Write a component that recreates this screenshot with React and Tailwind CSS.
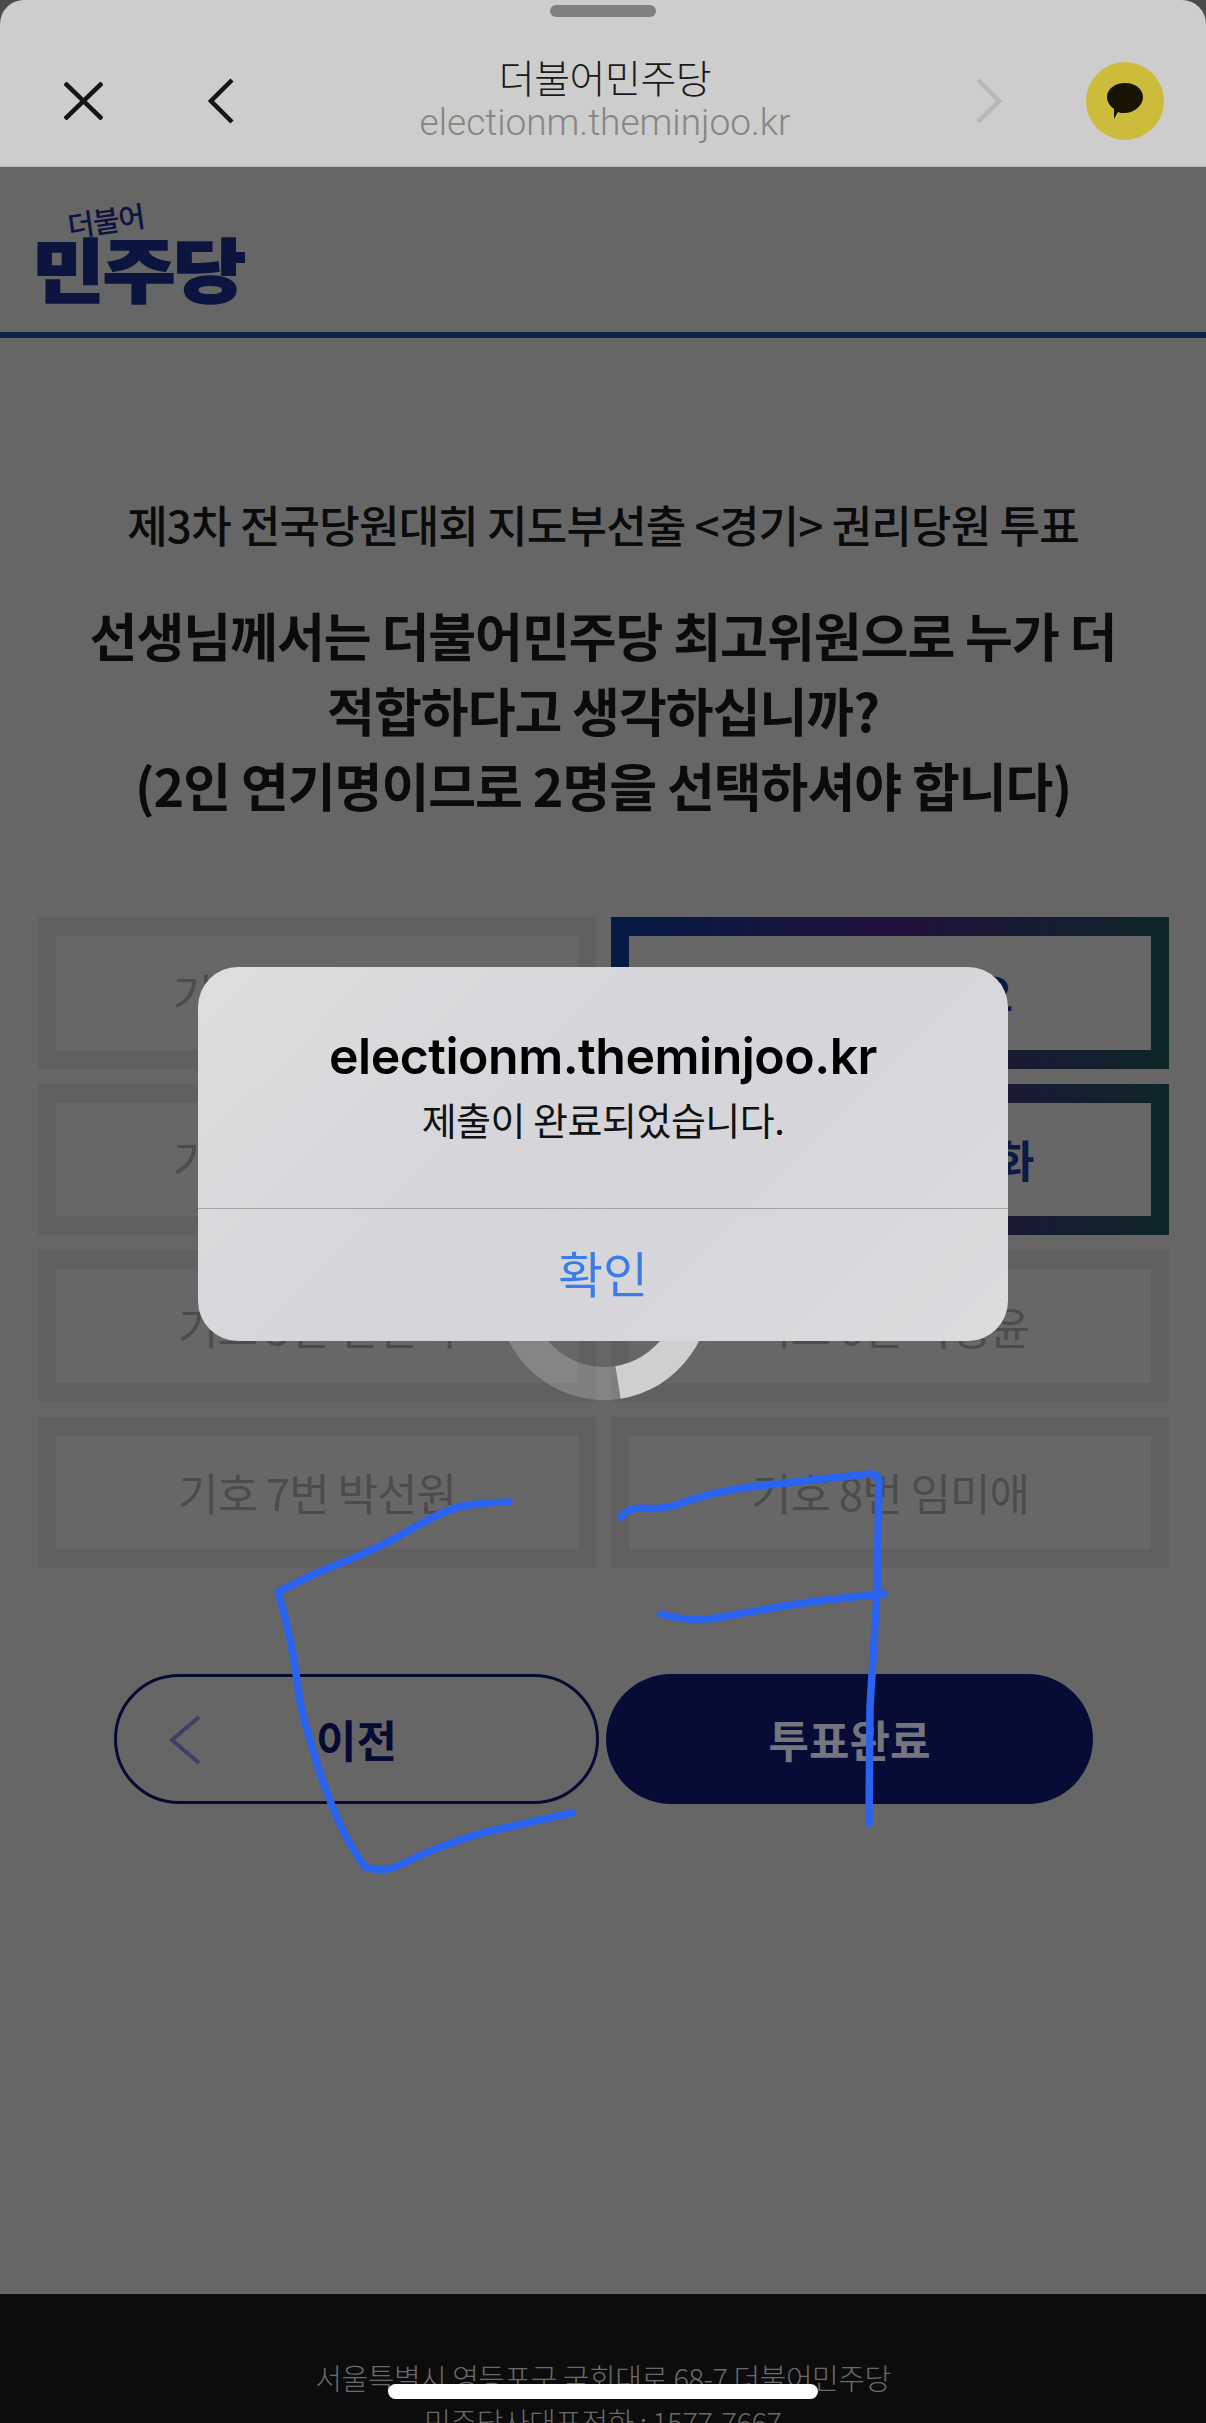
import React from 'react'

const kr = "font-['Noto_Sans_CJK_KR',sans-serif]"

// names behind the alert can't be read, so those stay as ○
const candidates = [
  { id: 1, label: '기호 1번 ○○○' },
  { id: 2, label: '기호 2번 ○오', selected: true },
  { id: 3, label: '기호 3번 ○○○' },
  { id: 4, label: '기호 4번 ○○화', selected: true },
  { id: 5, label: '기호 5번 전언기' },
  { id: 6, label: '기호 6번 이성윤' },
  { id: 7, label: '기호 7번 박선원' },
  { id: 8, label: '기호 8번 임미애' },
]

const Candidate = ({ label, selected }) => (
  <div
    className={
      selected
        ? 'h-[151.5px] px-[18px] py-[19px] bg-[linear-gradient(90deg,#031a44,#21103d_50%,#0e2628)]'
        : 'h-[151.5px] px-[18px] py-[19px] bg-[#606060]'
    }
  >
    <div
      className={
        selected
          ? 'h-full bg-[#676767] flex items-center justify-center text-[44px] font-semibold text-[#0c1a45] tracking-[-1px]'
          : 'h-full bg-[#676767] flex items-center justify-center text-[44px] text-[#4c4c4c] tracking-[-1px]'
      }
    >
      {label}
    </div>
  </div>
)

const TopBar = () => (
  <div className="relative h-[167px] bg-[#cdcdcd] rounded-t-[24px] border-b border-[#b9b9b9] shrink-0 flex items-center pl-[64px] pr-[42px]">
    <div className="absolute left-[550px] top-[5px] w-[106px] h-[12px] rounded-full bg-[#808080]"></div>
    <svg width="39" height="38" viewBox="0 0 39 38" className="mt-[35px] shrink-0" fill="none" stroke="#151515" strokeWidth="4.5">
      <path d="M1 1 L38 37 M38 1 L1 37" />
    </svg>
    <svg width="26" height="46" viewBox="0 0 26 46" className="ml-[105px] mt-[35px] shrink-0" fill="none" stroke="#151515" strokeWidth="4.5">
      <path d="M24 2 L3 23 L24 44" />
    </svg>
    <div className={`flex-1 flex flex-col items-center pt-[30px] ${kr}`}>
      <div className="text-[39px] leading-[50px] font-light text-[#1a1a1a] tracking-[-0.5px]">더불어민주당</div>
      <div className="text-[37px] leading-[44px] font-light text-[#858585] font-['Roboto',sans-serif]">electionm.theminjoo.kr</div>
    </div>
    <svg width="26" height="46" viewBox="0 0 26 46" className="mt-[35px] shrink-0" fill="none" stroke="#b8b8b8" strokeWidth="4.5">
      <path d="M2 2 L23 23 L2 44" />
    </svg>
    <div className="ml-[84px] mt-[35px] w-[78px] h-[78px] rounded-full bg-[#cdbb3c] flex items-center justify-center shrink-0">
      <svg width="36" height="36" viewBox="0 0 36 36" fill="#171404">
        <path d="M18 0 C28 0 36 6 36 14 C36 22 28 30 17 30 C15 30 13 30 11 29 L7 36 L7 26 C3 23 0 19 0 14 C0 6 8 0 18 0 Z" />
      </svg>
    </div>
  </div>
)

const Header = () => (
  <div className={`relative h-[171px] shrink-0 bg-[#666666] border-b-[6px] border-[#0b2243] ${kr}`}>
    <div className="absolute left-[32px] top-[60px] scale-y-[0.88] origin-top-left text-[79px] leading-[92px] font-black text-[#0c1440] tracking-[-2px] [-webkit-text-stroke:2px_#0c1440]">민주당</div>
    <div className="absolute left-[67px] top-[32px] -rotate-[8deg] text-[29px] leading-[40px] font-medium text-[#0c1440] tracking-[-1px]">더불어</div>
  </div>
)

const Scribble = () => (
  <svg className="absolute left-0 top-0 pointer-events-none" width="1206" height="2423" fill="none" stroke="#2a63f0" strokeWidth="7.5" strokeLinecap="round" strokeLinejoin="round">
    <path d="M509 1502 Q480 1503 462 1506 Q445 1510 415 1527 Q385 1545 348 1560 Q310 1575 278 1592 Q280 1600 284 1613 Q292 1645 296 1673 Q300 1710 308 1733 Q318 1770 331 1803 Q345 1840 365 1867 Q380 1872 395 1867 Q440 1845 482 1833 Q530 1822 572 1813" />
    <path d="M621 1517 Q628 1508 640 1508 Q660 1510 676 1505 Q710 1492 750 1487 Q810 1480 870 1474 Q878 1474 879 1480 L877 1593 L870 1707 L869 1823" />
    <path d="M884 1594 Q840 1598 803 1603 Q760 1610 716 1618 Q690 1622 661 1614" />
  </svg>
)

const Alert = () => (
  <div className={`absolute left-[198px] top-[967px] w-[810px] h-[374px] rounded-[40px] bg-[linear-gradient(135deg,#dedee0,#d4d4d9_50%,#dcdcdf)] flex flex-col ${kr}`}>
    <div className="h-[241px] flex flex-col items-center pt-[58px]">
      <div className="text-[50px] leading-[62px] font-semibold text-black font-['Inter',sans-serif] tracking-[-0.5px]">electionm.theminjoo.kr</div>
      <div className="mt-[7px] text-[38px] leading-[50px] text-[#111111] tracking-[-0.5px]">제출이 완료되었습니다.</div>
    </div>
    <div className="h-px bg-[#a5a5a8]"></div>
    <div className="flex-1 flex items-center justify-center text-[49px] text-[#3a7de8] pb-[6px]">확인</div>
  </div>
)

const App = () => {
  return (
    <div className={`relative h-[2423px] overflow-hidden bg-[#4a4a4a] flex flex-col ${kr}`}>
      <TopBar />
      <Header />

      <main className="flex-1 bg-[#666666] flex flex-col">
        <h1 className="mt-[158px] text-center text-[44px] leading-[56px] font-medium text-[#0b0b0b] tracking-[-0.8px]">
          제3차 전국당원대회 지도부선출 &lt;경기&gt; 권리당원 투표
        </h1>
        <h2 className="mt-[45px] text-center text-[52px] leading-[75px] font-bold text-[#0b0b0b] tracking-[-1px]">
          선생님께서는 더불어민주당 최고위원으로 누가 더<br />
          적합하다고 생각하십니까?<br />
          (2인 연기명이므로 2명을 선택하셔야 합니다)
        </h2>

        <div className="mt-[95px] pl-[38px] pr-[37px] grid grid-cols-2 gap-[15px]">
          {candidates.map((c) => (
            <Candidate key={c.id} label={c.label} selected={c.selected} />
          ))}
        </div>

        <div className="mt-[106px] flex justify-center gap-[7px] pl-[1px]">
          <button className="relative w-[485px] h-[130px] rounded-full border-[3px] border-[#050b33] text-[44px] font-semibold text-[#050b33] flex items-center justify-center">
            <svg width="32" height="50" viewBox="0 0 32 50" className="absolute left-[52px] top-[38px]" fill="none" stroke="#3c4066" strokeWidth="4">
              <path d="M30 2 L3 25 L30 48" />
            </svg>
            이전
          </button>
          <button className="w-[487px] h-[130px] rounded-full bg-[#060c35] text-[44px] font-semibold text-[#74757f]">
            투표완료
          </button>
        </div>
      </main>

      <footer className="h-[129px] shrink-0 bg-[#0c0c0c] pt-[61px] text-center text-[29px] leading-[44px] font-light text-[#6a6a6a] tracking-[-0.5px]">
        <div>서울특별시 영등포구 국회대로 68-7 더불어민주당</div>
        <div>민주당사대표전화 : 1577-7667</div>
      </footer>

      <div className="absolute left-[498px] top-[1188px] w-[212px] h-[212px] rounded-full border-[33px] border-white/20 border-t-[#cfcfcf] rotate-[126deg]"></div>
      <Scribble />
      <Alert />
      <div className="absolute left-[388px] top-[2384px] w-[430px] h-[15px] rounded-full bg-white"></div>
    </div>
  )
}

export default App
